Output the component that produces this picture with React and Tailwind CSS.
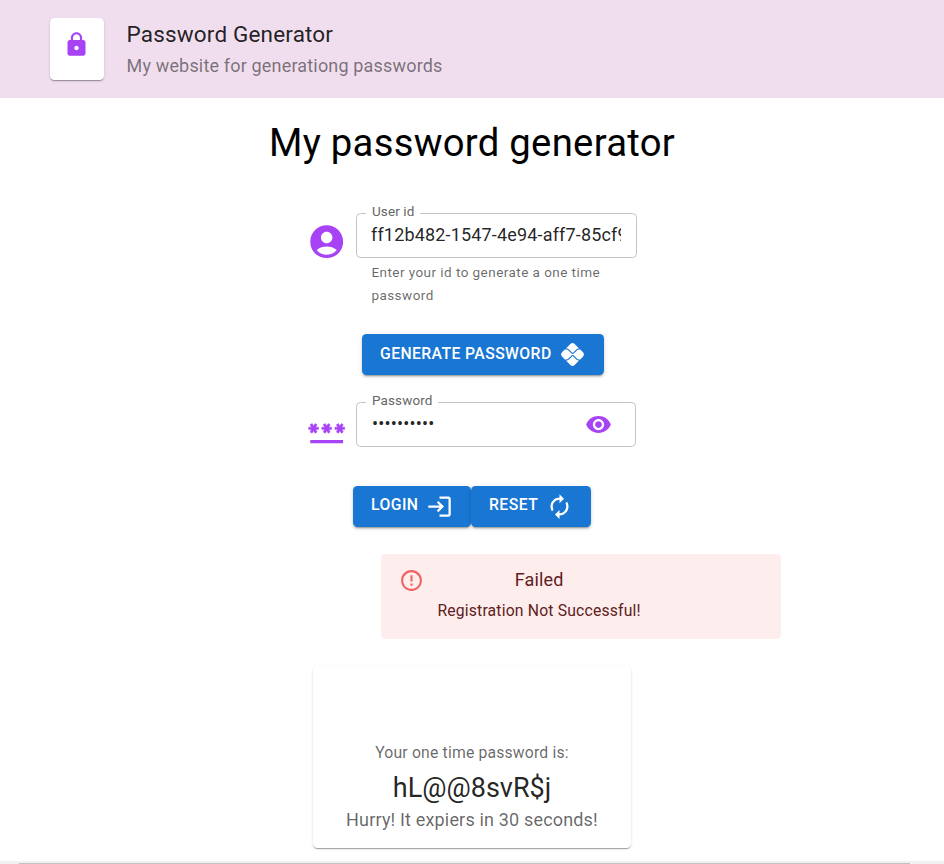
import { MdLock, MdAccountCircle, MdVisibility, MdPix, MdLogin, MdAutorenew, MdErrorOutline } from "react-icons/md";

const buttonClass =
  "flex h-[41px] items-center whitespace-nowrap rounded-[4.5px] bg-[#1976d2] px-[18px] text-[15.75px] font-medium leading-[27px] text-white shadow-[0_3px_1px_-2px_rgba(0,0,0,0.2),0_2px_2px_0_rgba(0,0,0,0.14),0_1px_5px_0_rgba(0,0,0,0.12)]";

function PasswordIcon({ className }) {
  return (
    <svg viewBox="0 0 24 24" className={className} fill="#a742f5">
      <path d="M2 17h20v2H2z" />
      <path
        stroke="#a742f5"
        strokeWidth="0.25"
        d="M3.15 12.95L4 11.47l.85 1.48 1.3-.75-.85-1.48H7v-1.5H5.3l.85-1.47L4.85 7 4 8.47 3.15 7l-1.3.75.85 1.47H1v1.5h1.7l-.85 1.48 1.3.75zm6.7-.75l1.3.75.85-1.48.85 1.48 1.3-.75-.85-1.48H15v-1.5h-1.7l.85-1.47-1.3-.75L12 8.47 11.15 7l-1.3.75.85 1.47H9v1.5h1.7l-.85 1.48zM23 9.22h-1.7l.85-1.47-1.3-.75L20 8.47 19.15 7l-1.3.75.85 1.47H17v1.5h1.7l-.85 1.48 1.3.75.85-1.48.85 1.48 1.3-.75-.85-1.48H23v-1.5z"
      />
    </svg>
  );
}

function Field({ label, className, children }) {
  return (
    <fieldset className={`h-[51px] min-w-0 rounded-[4.5px] border border-[#c4c4c4] ${className}`}>
      <legend className="ml-[9px] h-[13px] px-[6px] text-[13.5px] leading-[9px] tracking-[0.11px] text-[#666666]">
        {label}
      </legend>
      {children}
    </fieldset>
  );
}

export default function App() {
  return (
    <div className="flex h-[864px] w-[944px] flex-col overflow-hidden bg-white font-[Roboto,sans-serif] text-black/87">
      <header className="flex h-[98px] shrink-0 bg-[#f0deee] pl-[50px] pt-[18px]">
        <div className="h-[62px] w-[54px] rounded-[4.5px] bg-white px-[13.4px] pt-[13px] shadow-[0_2px_1px_-1px_rgba(0,0,0,0.2),0_1px_1px_0_rgba(0,0,0,0.14),0_1px_3px_0_rgba(0,0,0,0.12)]">
          <MdLock size={27} color="#a742f5" />
        </div>
        <div className="pl-[22.5px]">
          <h6 className="-mt-px text-[22.5px] leading-[34px] tracking-[0.17px]">Password Generator</h6>
          <p className="mt-px text-[18px] leading-[28px] tracking-[0.17px] text-black/50">My website for generationg passwords</p>
        </div>
      </header>

      <h1 className="mt-[22px] text-center text-[38.25px] leading-[47px] tracking-[0.28px] text-black">My password generator</h1>

      <main className="flex flex-col">
        <div className="mt-[40px] flex pl-[307px]">
          <MdAccountCircle size={39.4} color="#a742f5" className="mt-[15px] shrink-0" />
          <div className="ml-[9.6px] w-[281px]">
            <Field label="User id" className="w-[281px]">
              <div className="ml-[14px] mr-[15px] mt-[2px] overflow-hidden whitespace-nowrap text-[18px] leading-[26px] tracking-[0.17px]">
                ff12b482-1547-4e94-aff7-85cf9a1b
              </div>
            </Field>
            <p className="mx-[15.4px] mt-[3px] text-[13.5px] leading-[22.5px] tracking-[0.45px] text-black/60">
              Enter your id to generate a one time password
            </p>
          </div>
        </div>

        <button className={`${buttonClass} ml-[362px] mt-[28px] w-[242px] tracking-[0.4px]`}>
          <span className="-mt-[2px]">GENERATE PASSWORD</span>
          <MdPix size={27} className="ml-auto shrink-0" />
        </button>

        <div className="mt-[21px] flex h-[54px] pl-[307.4px]">
          <PasswordIcon className="mt-[16px] size-[39.4px] shrink-0" />
          <Field label="Password" className="ml-[9.2px] w-[280px]">
            <div className="ml-[15px] mr-[23px] mt-[2px] flex h-[27px] items-center justify-between">
              <span className="-mt-[2px] text-[18px] tracking-[0.17px]">••••••••••</span>
              <MdVisibility size={27} color="#a742f5" />
            </div>
          </Field>
        </div>

        <div className="ml-[353px] mt-[36px] flex">
          <button className={`${buttonClass} w-[118px] tracking-[0.45px]`}>
            <span className="-mt-[4px]">LOGIN</span>
            <MdLogin size={27} className="ml-[8px] shrink-0" />
          </button>
          <button className={`${buttonClass} w-[120px] tracking-[0.45px]`}>
            <span className="-mt-[4px]">RESET</span>
            <MdAutorenew size={27} className="ml-[8px] shrink-0" />
          </button>
        </div>

        <div className="ml-[381px] mt-[27px] flex h-[85px] w-[400px] rounded-[4.5px] bg-[#fdeded] text-[#5f2120]">
          <MdErrorOutline size={25} color="#ef5350" className="ml-[18px] mt-[14px] shrink-0 opacity-90" />
          <div className="ml-[13.4px] mt-[12px] text-center">
            <div className="text-[18px] leading-[27px] tracking-[0.17px]">Failed</div>
            <div className="mt-[6px] text-[15.75px] leading-[23px] tracking-[0.17px]">Registration Not Successful!</div>
          </div>
        </div>

        <section className="ml-[313px] mt-[27px] h-[182px] w-[318px] rounded-[4.5px] bg-white pt-[75px] text-center shadow-[0_2px_1px_-1px_rgba(0,0,0,0.2),0_1px_1px_0_rgba(0,0,0,0.14),0_1px_3px_0_rgba(0,0,0,0.12)]">
          <p className="text-[15.75px] leading-[24px] tracking-[0.17px] text-black/60">Your one time password is:</p>
          <p className="mt-[5px] text-[27px] leading-[36px]">hL@@8svR$j</p>
          <p className="text-[18px] leading-[27px] tracking-[0.17px] text-black/60">Hurry! It expiers in 30 seconds!</p>
        </section>
      </main>

      <div className="mt-auto h-[3px] shrink-0 bg-[#f1f1f1] pt-[2px]">
        <div className="ml-[19px] h-px w-[891px] bg-[#c1c1c1]" />
      </div>
    </div>
  );
}
